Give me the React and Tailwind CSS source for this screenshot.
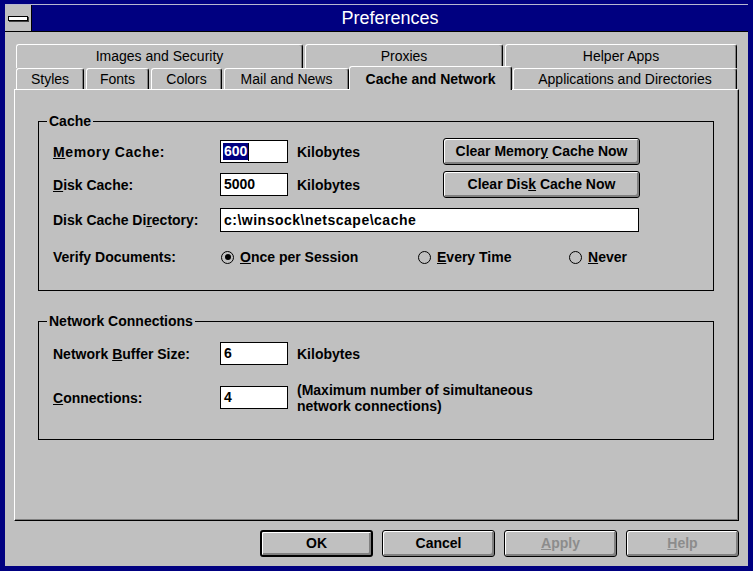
export default function App() {
  return (
    <div className="w-[753px] h-[571px] bg-[#000080] pt-[4px] px-[5px] pb-[5px] flex flex-col font-['Liberation_Sans',Arial,sans-serif] text-black">
      {/* Title bar */}
      <div className="h-[28px] flex border-t border-[#b8b8d0] border-b border-b-black">
        <div className="w-[27px] h-full bg-[#c0c0c0] border-r border-black flex items-center justify-center">
          <span className="w-[20px] h-[5px] bg-white border border-black shadow-[1px_1px_0_#404040]" />
        </div>
        <div className="flex-1 flex items-center justify-center text-white text-[18px]">Preferences</div>
      </div>

      {/* Client */}
      <div className="flex-1 bg-[#c0c0c0] flex flex-col px-[9px] pt-[12px] pb-[9px]">
        {/* Back row of tabs */}
        <div className="flex gap-[2px] pl-[2px] h-[24px]">
          <BackTab className="w-[287px]">Images and Security</BackTab>
          <BackTab className="w-[198px]">Proxies</BackTab>
          <BackTab className="w-[232px]">Helper Apps</BackTab>
        </div>

        {/* Front row of tabs */}
        <div className="flex items-start pl-[2px] h-[21px]">
          <FrontTab className="w-[68px] mr-[2px]">Styles</FrontTab>
          <FrontTab className="w-[63px] mr-[2px]">Fonts</FrontTab>
          <FrontTab className="w-[71px] mr-[2px]">Colors</FrontTab>
          <FrontTab className="w-[125px]">Mail and News</FrontTab>
          <div className="relative z-10 -mt-[2px] w-[163px] h-[24px] mr-[1px] bg-[#c0c0c0] border-t border-l border-white border-r border-r-black rounded-t-[3px] shadow-[inset_-1px_0_0_#808080] flex items-center justify-center pt-[1px] text-[14px] font-bold">
            Cache and Network
          </div>
          <FrontTab className="w-[224px]">Applications and Directories</FrontTab>
        </div>

        {/* Tab page */}
        <div className="h-[432px] border border-l-white border-t-white border-r-black border-b-black shadow-[inset_-1px_-1px_0_#808080] pl-[23px] pt-[31px]">
          <Group title="Cache" className="h-[170px] pt-[16px]">
            <div className="flex items-center h-[27px] pl-[14px]">
              <Label className="w-[167px] tracking-[0.6px]"><u>M</u>emory Cache:</Label>
              <div className="w-[68px] h-[23px] bg-white border border-black flex items-center pl-[2px] font-bold text-[14px]">
                <span className="bg-[#000080] text-white px-[1px] leading-[17px]">600</span>
                <span className="w-[1px] h-[18px] bg-black" />
              </div>
              <Label className="ml-[9px] w-[146px]">Kilobytes</Label>
              <Btn className="w-[197px]">Clear Memor<u>y</u> Cache Now</Btn>
            </div>
            <div className="flex items-center h-[27px] mt-[6px] pl-[14px]">
              <Label className="w-[167px]"><u>D</u>isk Cache:</Label>
              <Field className="w-[68px]">5000</Field>
              <Label className="ml-[9px] w-[146px]">Kilobytes</Label>
              <Btn className="w-[197px]">Clear Dis<u>k</u> Cache Now</Btn>
            </div>
            <div className="flex items-center h-[24px] mt-[10px] pl-[14px]">
              <Label className="w-[167px]">Disk Cache Di<u>r</u>ectory:</Label>
              <Field className="w-[419px] h-[24px] tracking-[0.5px]">c:\winsock\netscape\cache</Field>
            </div>
            <div className="flex items-center h-[20px] mt-[15px] pl-[14px]">
              <Label className="w-[167px]">Verify Documents:</Label>
              <Radio checked className="ml-[1px] w-[197px]"><u>O</u>nce per Session</Radio>
              <Radio className="w-[151px]"><u>E</u>very Time</Radio>
              <Radio><u>N</u>ever</Radio>
            </div>
          </Group>

          <Group title="Network Connections" className="h-[119px] mt-[30px] pt-[20px]">
            <div className="flex items-center h-[23px] pl-[14px]">
              <Label className="w-[167px]">Network <u>B</u>uffer Size:</Label>
              <Field className="w-[68px]">6</Field>
              <Label className="ml-[9px]">Kilobytes</Label>
            </div>
            <div className="flex items-center h-[23px] mt-[21px] pl-[14px]">
              <Label className="w-[167px]"><u>C</u>onnections:</Label>
              <Field className="w-[68px]">4</Field>
              <div className="ml-[9px] font-bold text-[14px] leading-[16px]">
                <div>(Maximum number of simultaneous</div>
                <div>network connections)</div>
              </div>
            </div>
          </Group>
        </div>

        {/* Dialog buttons */}
        <div className="flex justify-end gap-[9px] mt-[9px]">
          <Btn def className="w-[113px]">OK</Btn>
          <Btn className="w-[113px]">Cancel</Btn>
          <Btn disabled className="w-[113px]"><u>A</u>pply</Btn>
          <Btn disabled className="w-[113px]"><u>H</u>elp</Btn>
        </div>
      </div>
    </div>
  );
}

function BackTab({ children, className = "" }) {
  return (
    <div className={`h-full border-t border-l border-white border-r border-r-black rounded-t-[3px] shadow-[inset_-1px_0_0_#808080] flex items-center justify-center text-[14px] ${className}`}>
      {children}
    </div>
  );
}

function FrontTab({ children, className = "" }) {
  return (
    <div className={`h-[21px] border-t border-l border-white border-r border-r-black rounded-t-[3px] shadow-[inset_-1px_0_0_#808080] flex items-center justify-center text-[14px] ${className}`}>
      {children}
    </div>
  );
}

function Group({ title, children, className = "" }) {
  return (
    <div className={`relative w-[676px] border border-black ${className}`}>
      <span className="absolute -top-[9px] left-[8px] px-[2px] bg-[#c0c0c0] font-bold text-[14px] leading-[16px]">{title}</span>
      {children}
    </div>
  );
}

function Label({ children, className = "" }) {
  return <div className={`font-bold text-[14px] leading-[16px] whitespace-nowrap ${className}`}>{children}</div>;
}

function Field({ children, className = "" }) {
  return (
    <div className={`h-[23px] bg-white border border-black flex items-center pl-[3px] font-bold text-[14px] ${className}`}>
      {children}
    </div>
  );
}

function Radio({ checked, children, className = "" }) {
  return (
    <div className={`flex items-center gap-[6px] font-bold text-[14px] ${className}`}>
      <span className="w-[13px] h-[13px] rounded-full border border-black flex items-center justify-center">
        {checked && <span className="w-[6px] h-[6px] rounded-full bg-black" />}
      </span>
      <span>{children}</span>
    </div>
  );
}

function Btn({ children, def, disabled, className = "" }) {
  return (
    <button
      className={`h-[27px] rounded-[3px] bg-[#c0c0c0] font-bold text-[14px] shadow-[inset_1px_1px_0_#fff,inset_-2px_-2px_0_#808080] ${def ? "border-2 border-black" : "border border-black"} ${disabled ? "text-[#8c8c8c]" : "text-black"} ${className}`}
    >
      {children}
    </button>
  );
}
